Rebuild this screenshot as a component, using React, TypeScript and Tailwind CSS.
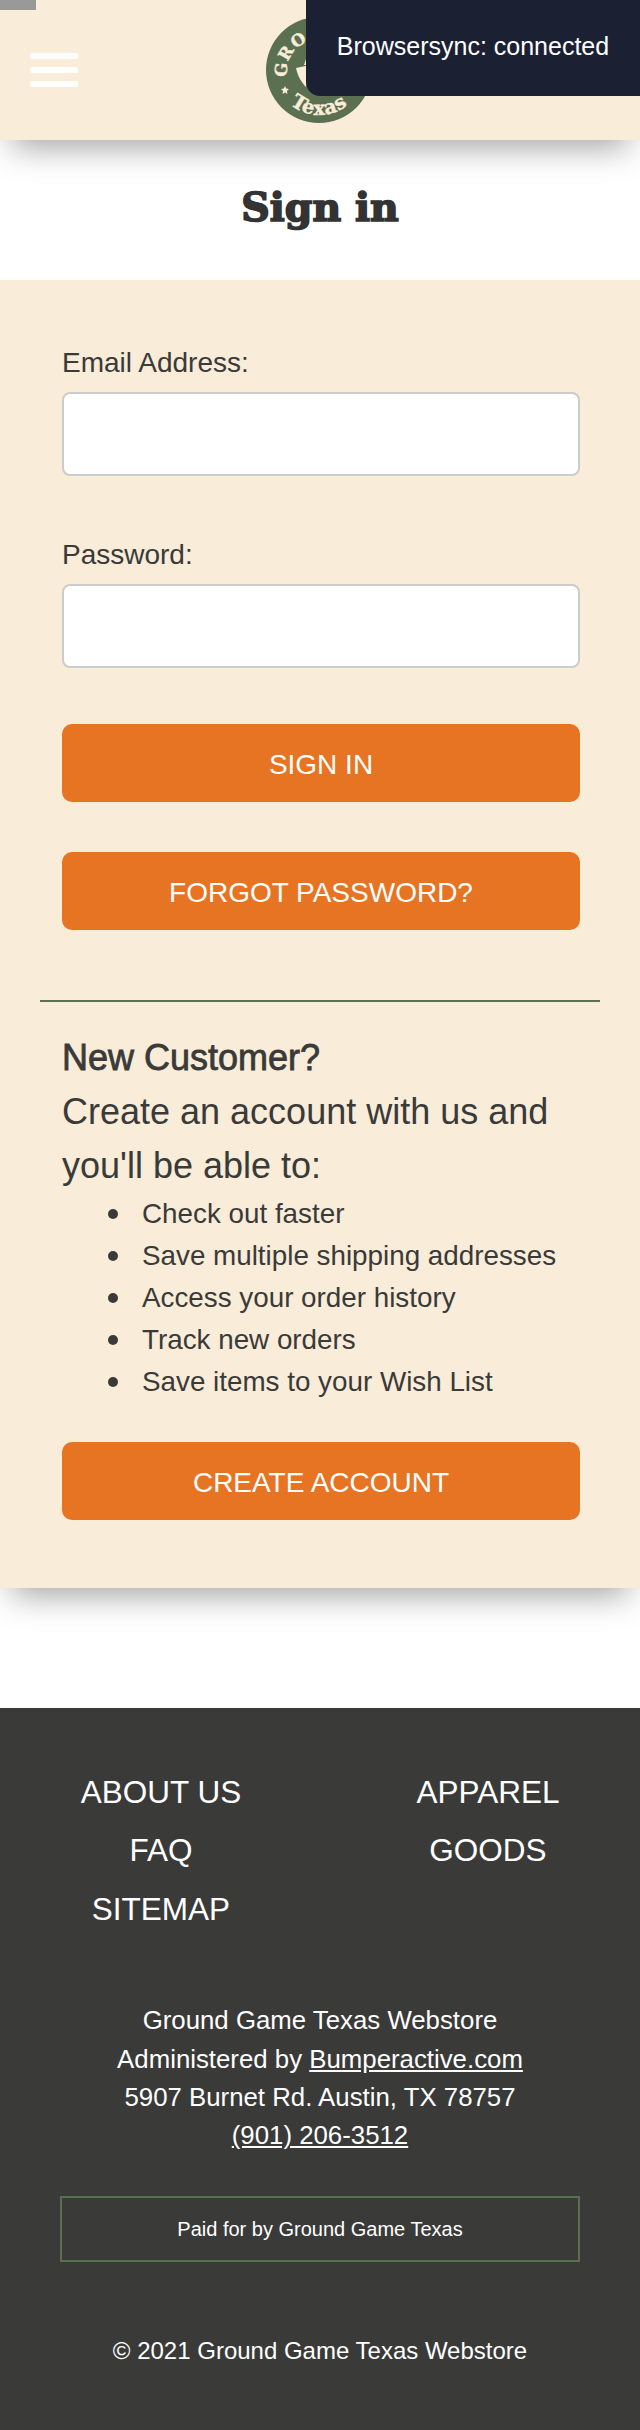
export default function App() {
  const btn = "flex h-[78px] items-center justify-center rounded-[10px] bg-[#e77422] pt-[3px] text-[28px] text-white";
  const input = "mt-2 block h-[84px] w-full rounded-[8px] border-2 border-[#cccccc] bg-white";
  const items = ["Check out faster", "Save multiple shipping addresses", "Access your order history", "Track new orders", "Save items to your Wish List"];
  return (
    <div className="relative w-[640px] overflow-hidden bg-white font-['Liberation_Sans',Arial,sans-serif] text-[#3a3a38]">
      <div className="absolute left-0 top-0 z-30 h-[10px] w-[36px] bg-[#999999]" />
      <div className="absolute right-0 top-0 z-30 flex h-[96px] w-[334px] items-center justify-center rounded-bl-[14px] bg-[#1c2033] pb-[2px] text-[25px] text-white">
        Browsersync: connected
      </div>
      <header className="relative z-20 flex h-[140px] items-center bg-[#f9ecd8] pl-[30px] shadow-[0_20px_30px_-12px_rgba(0,0,0,0.35)]">
        <div className="flex flex-col gap-2">
          <span className="block h-[6px] w-[48px] rounded-[2px] bg-white" />
          <span className="block h-[6px] w-[48px] rounded-[2px] bg-white" />
          <span className="block h-[6px] w-[48px] rounded-[2px] bg-white" />
        </div>
        <svg className="absolute left-[266px] top-[17px]" width="106" height="106" viewBox="0 0 106 106">
          <circle cx="53" cy="53" r="53" fill="#5a7050" />
          <path id="top-arc" d="M 21.5 60 A 32 32 0 1 1 84.5 60" fill="none" />
          <path id="bottom-arc" d="M 9 64 A 45.5 45.5 0 0 0 97 64" fill="none" />
          <text fontFamily="'DejaVu Serif', serif" fontWeight="700" fontSize="16.5" letterSpacing="1" fill="#f9ecd8" stroke="#f9ecd8" strokeWidth="0.4">
            <textPath href="#top-arc">GROUND GAME</textPath>
          </text>
          <text fontFamily="'DejaVu Serif', serif" fontWeight="700" fontSize="19.5" letterSpacing="0.6" fill="#f9ecd8" stroke="#f9ecd8" strokeWidth="0.4" textAnchor="middle">
            <textPath href="#bottom-arc" startOffset="50%">Texas</textPath>
          </text>
          <polygon points="19,69 20.2,71.6 23,72 20.9,74 21.5,77 19,75.5 16.5,77 17.1,74 15,72 17.8,71.6" fill="#f9ecd8" />
          <path d="M 30 51 C 32 60 36 66 40 70 C 42 64 44 56 44 48 Z" fill="#f9ecd8" />
          <path d="M 38 48 L 40 42 L 42 48 Z" fill="#f9ecd8" />
        </svg>
      </header>
      <div className="flex h-[140px] items-center justify-center pb-[6px]">
        <h1 className="font-['DejaVu_Serif',serif] text-[39.5px] font-bold leading-[50px] text-[#333333] [-webkit-text-stroke:1.7px_#333333]">Sign in</h1>
      </div>
      <main className="relative z-10 bg-[#f9ecd8] pb-[68px] pt-[62px] shadow-[0_20px_30px_-12px_rgba(0,0,0,0.35)]">
        <div className="pl-[62px] pr-[60px]">
          <label className="block text-[28px] leading-[42px]">Email Address:</label>
          <div className={input} />
          <label className="mt-[58px] block text-[28px] leading-[42px]">Password:</label>
          <div className={input} />
          <div className={`mt-[56px] ${btn}`}>SIGN IN</div>
          <div className={`mt-[50px] ${btn}`}>FORGOT PASSWORD?</div>
        </div>
        <hr className="mx-[40px] mt-[70px] border-0 border-t-2 border-[#5a7050]" />
        <div className="pl-[62px] pr-[60px] pt-[29px]">
          <h2 className="text-[36px] font-normal leading-[54px] [-webkit-text-stroke:0.8px_#3a3a38]">New Customer?</h2>
          <p className="text-[36px] leading-[54px]">Create an account with us and you'll be able to:</p>
          <ul className="pl-[46px] text-[27.8px] leading-[42px]">
            {items.map((t) => (
              <li key={t} className="flex items-center gap-[24px]">
                <span className="h-[10px] w-[10px] rounded-full bg-[#3a3a38]" />
                <span>{t}</span>
              </li>
            ))}
          </ul>
          <div className={`mt-[39px] ${btn}`}>CREATE ACCOUNT</div>
        </div>
      </main>
      <div className="h-[120px]" />
      <footer className="h-[722px] bg-[#3a3a38] text-white">
        <div className="flex pt-[55px] text-[31.5px] leading-[58.4px]">
          <div className="flex w-[322px] flex-col items-center">
            <span>ABOUT US</span>
            <span>FAQ</span>
            <span>SITEMAP</span>
          </div>
          <div className="ml-[14px] flex w-[304px] flex-col items-center">
            <span>APPAREL</span>
            <span>GOODS</span>
          </div>
        </div>
        <div className="mt-[63px] text-center text-[25.8px] leading-[38.4px]">
          <div>Ground Game Texas Webstore</div>
          <div>Administered by <a className="underline">Bumperactive.com</a></div>
          <div>5907 Burnet Rd. Austin, TX 78757</div>
          <div><a className="underline">(901) 206-3512</a></div>
        </div>
        <div className="ml-[60px] mt-[41px] flex h-[66px] w-[520px] items-center justify-center border-2 border-[#5a7050] text-[20px]">
          Paid for by Ground Game Texas
        </div>
        <div className="mt-[71px] text-center text-[24px] leading-[36px]">© 2021 Ground Game Texas Webstore</div>
      </footer>
    </div>
  );
}
